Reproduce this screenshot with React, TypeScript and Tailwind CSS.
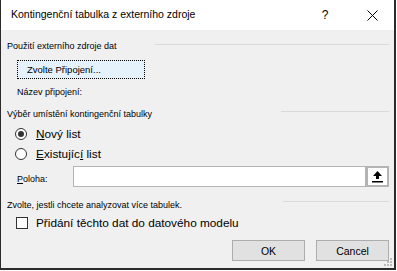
const font = "font-['Liberation_Sans',Arial,sans-serif]";

const Radio = ({ checked }: { checked?: boolean }) => (
  <div className="w-[12px] h-[12px] rounded-full border border-[#333] bg-white flex items-center justify-center shrink-0">
    {checked && <div className="w-[6px] h-[6px] rounded-full bg-[#333]" />}
  </div>
);

const CloseIcon = () => (
  <svg width="11" height="11" viewBox="0 0 11 11">
    <path d="M0.5 0.5 L10.5 10.5 M10.5 0.5 L0.5 10.5" stroke="#000" strokeWidth="1" />
  </svg>
);

const UploadIcon = () => (
  <svg width="11" height="12" viewBox="0 0 11 12">
    <path d="M5.5 0 L10 5 L7 5 L7 8 L4 8 L4 5 L1 5 Z" fill="#000" />
    <rect x="0" y="10" width="11" height="1.5" fill="#000" />
  </svg>
);

const Grip = () => (
  <svg width="8" height="8" viewBox="0 0 8 8" className="absolute right-[2px] bottom-[2px]">
    <rect x="6" y="0" width="2" height="2" fill="#bcbcbc" />
    <rect x="3" y="3" width="2" height="2" fill="#bcbcbc" />
    <rect x="6" y="3" width="2" height="2" fill="#bcbcbc" />
    <rect x="0" y="6" width="2" height="2" fill="#bcbcbc" />
    <rect x="3" y="6" width="2" height="2" fill="#bcbcbc" />
    <rect x="6" y="6" width="2" height="2" fill="#bcbcbc" />
  </svg>
);

export default function App() {
  return (
    <div className={`w-[397px] h-[271px] bg-white text-black ${font}`}>
      <div className="w-[396px] h-[270px] border-l border-r-2 border-b-2 border-[#2b2b2b] flex flex-col relative">
        {/* Title bar */}
        <div className="h-[30px] bg-white flex items-center shrink-0">
          <span className="ml-[10px] text-[10.5px]">Kontingenční tabulka z externího zdroje</span>
          <span className="ml-auto text-[12px] w-[8px] text-center">?</span>
          <span className="ml-[38px] mr-[16px] flex"><CloseIcon /></span>
        </div>

        {/* Body */}
        <div className="flex-1 bg-[#f0f0f0] pl-[6px] pr-[5px] flex flex-col text-[9px] leading-[12px] relative">
          {/* Section 1 */}
          <div className="mt-[10px] flex items-start h-[12px]">
            <span>Použití externího zdroje dat</span>
            <div className="ml-auto mt-[4px] w-[234px] h-px bg-[#dadada]" />
          </div>
          <div className="mt-[8px] ml-[10px] w-[128px] h-[19px] bg-[#e5f1fb] border border-dotted border-black flex items-center text-[9.5px]">
            <span className="ml-[9px]">Zvolte Připojení...</span>
          </div>
          <div className="mt-[7px] ml-[10px]">Název připojení:</div>

          {/* Section 2 */}
          <div className="mt-[10px] flex items-start h-[12px]">
            <span>Výběr umístění kontingenční tabulky</span>
            <div className="ml-auto mt-[3px] w-[108px] h-px bg-[#dadada]" />
          </div>
          <div className="mt-[7px] ml-[8px] flex items-center h-[14px] text-[11.8px]">
            <Radio checked />
            <span className="ml-[9px]"><span className="underline">N</span>ový list</span>
          </div>
          <div className="mt-[6px] ml-[8px] flex items-center h-[14px] text-[11.8px]">
            <Radio />
            <span className="ml-[9px]"><span className="underline">E</span>xistujíc<span className="underline">í</span> list</span>
          </div>
          <div className="mt-[5px] flex items-center h-[21px]">
            <span className="ml-[10px] w-[56px] mt-[5px]"><span className="underline">P</span>oloha:</span>
            <div className="w-[294px] h-[21px] bg-white border border-[#b4b4b4]" />
            <div className="w-[23px] h-[21px] bg-white border-2 border-[#b4b4b4] flex items-center justify-center">
              <UploadIcon />
            </div>
          </div>

          {/* Section 3 */}
          <div className="mt-[12px] flex items-start h-[12px]">
            <span>Zvolte, jestli chcete analyzovat více tabulek.</span>
            <div className="ml-auto mt-[2px] w-[106px] h-px bg-[#dadada]" />
          </div>
          <div className="mt-[5px] ml-[9px] flex items-center h-[14px] text-[11.8px]">
            <div className="w-[12px] h-[12px] border border-[#333] bg-white shrink-0" />
            <span className="ml-[8px]">Přidání těchto dat do datového modelu</span>
          </div>

          {/* Buttons */}
          <div className="mt-[10px] flex justify-end gap-[11px] text-[10.5px]">
            <div className="w-[73px] h-[21px] bg-[#e1e1e1] border border-[#adadad] flex items-center justify-center">OK</div>
            <div className="w-[73px] h-[21px] bg-[#e1e1e1] border border-[#adadad] flex items-center justify-center">Cancel</div>
          </div>
          <Grip />
        </div>
      </div>
    </div>
  );
}
